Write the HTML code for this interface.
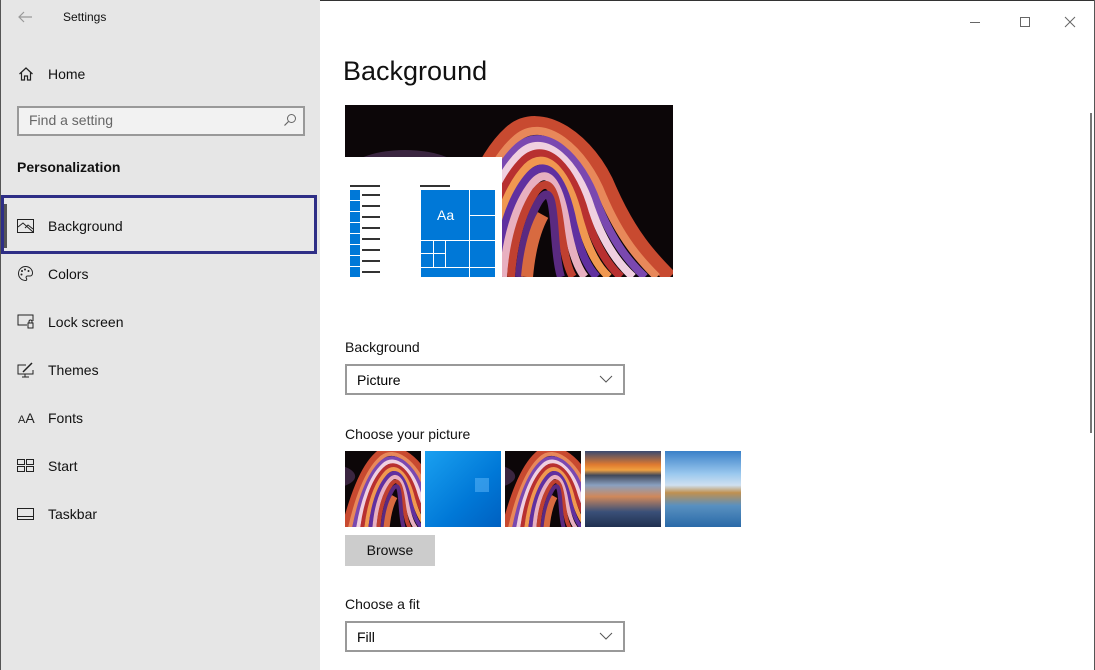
<!DOCTYPE html>
<html><head><meta charset="utf-8"><style>
*{margin:0;padding:0;box-sizing:border-box}
body{width:1095px;height:670px;overflow:hidden;font-family:"Liberation Sans",sans-serif;background:#fff;position:relative;color:#000}
.a{position:absolute}
#side{left:0;top:0;width:320px;height:670px;background:#e6e6e6;border-left:1px solid #555}
.t{font-size:14px;color:#111;white-space:nowrap}
.nav{left:48px;font-size:14px;color:#111}
.thumb{top:451px;width:76px;height:76px;overflow:hidden}
.dd{left:345px;width:280px;height:31px;border:2px solid #999;background:#fff;font-size:14px;padding:6px 10px}
.dd svg{position:absolute;right:10px;top:9px}
</style></head><body>
<svg width="0" height="0" style="position:absolute"><defs>
<symbol id="sw" viewBox="0 0 328 172">
<rect width="328" height="172" fill="#0c0608"/>
<ellipse cx="60" cy="70" rx="60" ry="25" fill="#3a2540"/>
<g fill="none" stroke-width="8">
<path d="M100 172C115 115 135 55 165 28C195 0 245 35 265 85C285 130 305 152 325 172" stroke="#c84a30" stroke-width="14"/>
<path d="M110 172C122 118 142 60 170 35C198 8 240 45 258 92C276 134 295 155 312 172" stroke="#e8885a"/>
<path d="M118 172C128 120 146 66 173 42C200 18 236 52 252 98C268 138 285 158 300 172" stroke="#7a48b0"/>
<path d="M126 172C134 122 150 72 176 48C200 26 232 58 246 103C260 142 275 160 288 172" stroke="#f0d0e0"/>
<path d="M134 172C140 125 155 78 179 55C202 34 228 65 240 108C252 145 265 162 276 172" stroke="#b83030"/>
<path d="M142 172C147 128 160 85 182 62C203 42 224 72 234 113C244 148 254 163 264 172" stroke="#f09850"/>
<path d="M150 172C154 132 165 92 185 70C204 50 220 78 228 118C236 150 244 164 252 172" stroke="#6030a0"/>
<path d="M158 172C161 136 170 100 188 78C205 58 216 85 222 122C228 152 234 165 240 172" stroke="#e8b0c0"/>
<path d="M166 172C168 140 176 108 191 86C206 68 212 92 216 126C220 154 224 166 228 172" stroke="#c04030"/>
<path d="M174 172C176 145 182 116 194 96C206 78 208 100 210 130C212 156 214 166 216 172" stroke="#5a2a80"/>
<path d="M182 172C184 150 188 128 198 110" stroke="#d86a40" stroke-width="12"/>
</g></symbol></defs></svg>
<div class="a" style="left:0;top:0;width:1095px;height:1px;background:#333"></div>
<div class="a" style="right:0;top:0;width:1px;height:670px;background:#555"></div>
<div id="side" class="a"></div>
<svg class="a" style="left:17px;top:10px" width="16" height="14"><path d="M15 7H2M7 2L2 7l5 5" fill="none" stroke="#999" stroke-width="1.2"/></svg>
<div class="a t" style="left:63px;top:10px;font-size:12px">Settings</div>
<svg class="a" style="left:18px;top:66px" width="16" height="16"><path d="M1.5 8L8 2l6.5 6M3.5 6.5V14h3V10h3v4h3V6.5" fill="none" stroke="#222" stroke-width="1.2"/></svg>
<div class="a nav" style="top:66px">Home</div>
<div class="a" style="left:17px;top:106px;width:288px;height:30px;border:2px solid #999;background:#f2f2f2"></div>
<div class="a t" style="left:29px;top:112px;color:#666">Find a setting</div>
<svg class="a" style="left:283px;top:113px" width="14" height="14"><circle cx="8.5" cy="5.5" r="4" fill="none" stroke="#666" stroke-width="1"/><path d="M5.5 8.5L1.5 12.5" stroke="#666" stroke-width="1.2"/></svg>
<div class="a" style="left:17px;top:159px;font-size:14px;font-weight:bold;color:#111">Personalization</div>
<div class="a" style="left:1px;top:195px;width:316px;height:59px;border:3px solid #2e2e86;background:#e8e8e8"></div>
<div class="a" style="left:4px;top:204px;width:3px;height:44px;background:#555"></div>
<svg class="a" style="left:17px;top:219px" width="17" height="14"><rect x="0.5" y="0.5" width="16" height="13" fill="none" stroke="#222"/><path d="M1 8l5-4 10 9M8 9l3-3 5 4" fill="none" stroke="#222"/></svg>
<div class="a nav" style="top:218px">Background</div>
<svg class="a" style="left:17px;top:265px" width="17" height="17"><path d="M8.5 1.5a7 7 0 1 0 0 14c1.5 0 1.5-1.5 .8-2.4-.7-.9 0-2.1 1.2-2.1h2.5c1.5 0 2.5-1.2 2.5-3 0-3.5-3-6.5-7-6.5z" fill="none" stroke="#222"/><circle cx="5" cy="6" r="1" fill="#222"/><circle cx="8" cy="4.5" r="1" fill="#222"/><circle cx="11.5" cy="6" r="1" fill="#222"/><circle cx="4.5" cy="9.5" r="1" fill="#222"/></svg>
<div class="a nav" style="top:266px">Colors</div>
<svg class="a" style="left:17px;top:314px" width="17" height="15"><path d="M10 11H1V1h15v6" fill="none" stroke="#222"/><rect x="11" y="9" width="5" height="5" fill="none" stroke="#222"/><path d="M12 9V7.5a1.5 1.5 0 0 1 3 0V9" fill="none" stroke="#222"/></svg>
<div class="a nav" style="top:314px">Lock screen</div>
<svg class="a" style="left:17px;top:362px" width="17" height="16"><path d="M9 3H1v9h15V8M8 12v3M5 15h7" fill="none" stroke="#222"/><path d="M6 10l2-2 7-7" stroke="#222" stroke-width="1.5"/></svg>
<div class="a nav" style="top:362px">Themes</div>
<div class="a" style="left:18px;top:410px;font-size:11px;color:#222">A<span style="font-size:14px">A</span></div>
<div class="a nav" style="top:410px">Fonts</div>
<svg class="a" style="left:17px;top:459px" width="17" height="13"><rect x="0.5" y="0.5" width="7" height="5" fill="none" stroke="#222"/><rect x="9.5" y="0.5" width="7" height="5" fill="none" stroke="#222"/><rect x="0.5" y="7.5" width="7" height="5" fill="none" stroke="#222"/><rect x="9.5" y="7.5" width="7" height="5" fill="none" stroke="#222"/></svg>
<div class="a nav" style="top:458px">Start</div>
<svg class="a" style="left:17px;top:508px" width="17" height="12"><rect x="0.5" y="0.5" width="16" height="11" fill="none" stroke="#222"/><path d="M1 8.5h15" stroke="#222"/></svg>
<div class="a nav" style="top:506px">Taskbar</div>

<svg class="a" style="left:970px;top:16px" width="110" height="12"><path d="M0 6.5h10" stroke="#666"/><rect x="50.5" y="1.5" width="9" height="9" fill="none" stroke="#666"/><path d="M95 1l10 10M105 1L95 11" stroke="#666"/></svg>
<div class="a" style="left:1090px;top:113px;width:2px;height:320px;background:#777"></div>

<div class="a" style="left:343px;top:56px;font-size:27px;color:#111">Background</div>
<div class="a" style="left:345px;top:105px;width:328px;height:172px;overflow:hidden">
<svg width="328" height="172"><use href="#sw" width="328" height="172"/></svg>
<div class="a" style="left:0;top:52px;width:157px;height:120px;background:#fff">
<div class="a" style="left:5px;top:28px;width:30px;height:2px;background:#333"></div>
<div class="a" style="left:75px;top:28px;width:30px;height:2px;background:#333"></div>
<div class="a" style="left:5px;top:33px;width:10px;height:87px;background:repeating-linear-gradient(#0078d7 0 10px,#fff 10px 11px)"></div>
<div class="a" style="left:17px;top:37px;width:18px;height:80px;background:repeating-linear-gradient(#333 0 2px,transparent 2px 11px)"></div>
<div class="a" style="left:76px;top:33px;width:74px;height:87px;background:#0078d7">
<div class="a" style="left:48px;top:0;width:1px;height:87px;background:#fff"></div>
<div class="a" style="left:0;top:50px;width:74px;height:1px;background:#fff"></div>
<div class="a" style="left:48px;top:25px;width:26px;height:1px;background:#fff"></div>
<div class="a" style="left:0;top:77px;width:74px;height:1px;background:#fff"></div>
<div class="a" style="left:12px;top:51px;width:1px;height:26px;background:#fff"></div>
<div class="a" style="left:24px;top:51px;width:1px;height:26px;background:#fff"></div>
<div class="a" style="left:0;top:63px;width:24px;height:1px;background:#fff"></div>
<div class="a" style="left:16px;top:17px;color:#fff;font-size:14px">Aa</div>
</div></div></div>

<div class="a t" style="left:345px;top:339px">Background</div>
<div class="a dd" style="top:364px">Picture<svg width="14" height="8"><path d="M1 1l6 6 6-6" fill="none" stroke="#555"/></svg></div>
<div class="a t" style="left:345px;top:426px">Choose your picture</div>
<div class="a thumb" style="left:345px"><svg width="76" height="76" viewBox="100 20 150 150"><use href="#sw" width="328" height="172"/></svg></div>
<div class="a thumb" style="left:425px;background:linear-gradient(135deg,#1aa0f0,#0078d7 60%,#0060c0)"><div class="a" style="left:50px;top:27px;width:14px;height:14px;background:#6cc0ff;opacity:.45"></div></div>
<div class="a thumb" style="left:505px"><svg width="76" height="76" viewBox="100 20 150 150"><use href="#sw" width="328" height="172"/></svg></div>
<div class="a thumb" style="left:585px;background:linear-gradient(#3a4a70 0,#e07a30 18%,#f0a040 25%,#40485a 32%,#8aa0c0 45%,#d0885a 60%,#3a5078 80%,#203050)"></div>
<div class="a thumb" style="left:665px;background:linear-gradient(#3a80c8 0,#9ac8ee 30%,#cfe0f0 45%,#c09050 55%,#5890c0 72%,#2a6aa8)"></div>
<div class="a" style="left:345px;top:535px;width:90px;height:31px;background:#ccc;font-size:14px;text-align:center;line-height:31px;color:#111">Browse</div>
<div class="a t" style="left:345px;top:596px">Choose a fit</div>
<div class="a dd" style="top:621px">Fill<svg width="14" height="8"><path d="M1 1l6 6 6-6" fill="none" stroke="#555"/></svg></div>
</body></html>
